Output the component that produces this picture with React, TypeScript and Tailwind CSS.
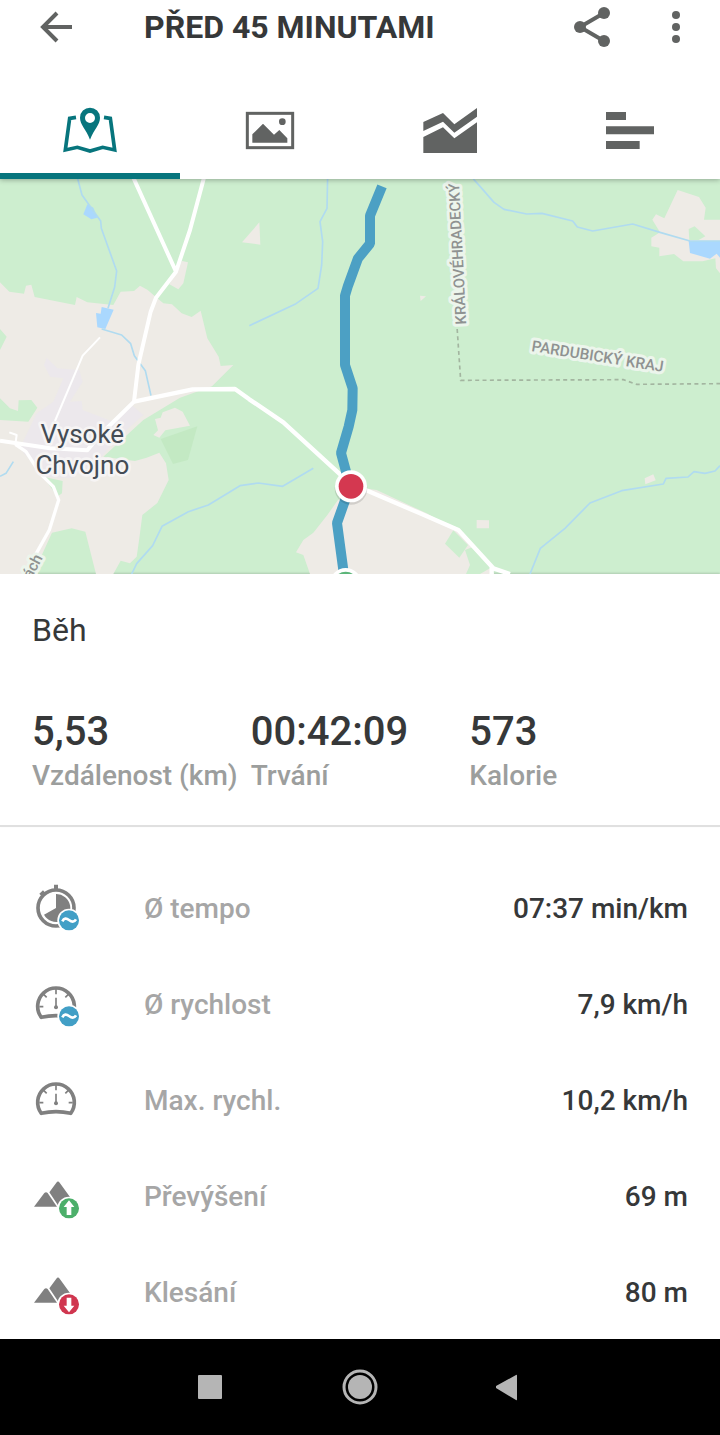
import type { ReactNode } from "react";

const ROUTE =
  "M1146 34L1110 122L1110 206L1074 250L1044 332L1035 362L1035 570L1058 640L1057 705L1046 755L1023 834L1050 934L1011 1044L1032 1200";

const MapTabIcon: React.FC = () => (
  <svg viewBox="186 318 168 144" className="h-12 w-14" fill="currentColor" aria-hidden="true">
    <path fillRule="evenodd" d="M270 323a30 30 0 0 0-30 30c0 21 18 34 30 66c12-32 30-45 30-66a30 30 0 0 0-30-30zm0 16a15 15 0 1 1 0 30a15 15 0 0 1 0-30z" />
    <path d="M228 352L209 355L196 450L232 442L270 453L308 442L344 450L331 355L312 352" fill="none" stroke="currentColor" strokeWidth="11" />
  </svg>
);

const PhotoTabIcon: React.FC = () => (
  <svg viewBox="726 318 168 144" className="h-12 w-14" fill="currentColor" aria-hidden="true">
    <rect x="742" y="340" width="136" height="103" fill="none" stroke="currentColor" strokeWidth="9" />
    <path d="M757 428V403L789 371L822 404L838 390L862 415V428Z" />
    <circle cx="847" cy="365" r="10" />
  </svg>
);

const ChartTabIcon: React.FC = () => (
  <svg viewBox="186 318 168 144" className="h-12 w-14" fill="currentColor" aria-hidden="true">
    <path d="M190 366L249 339L283 373L351 324V350L283 398L249 365L190 393Z" />
    <path d="M190 411L249 382L283 415L351 367V459H190Z" />
  </svg>
);

const SplitsTabIcon: React.FC = () => (
  <svg viewBox="726 318 168 144" className="h-12 w-14" fill="currentColor" aria-hidden="true">
    <path d="M738 336h60v24h-60zM738 379h144v24h-144zM738 423h101v24h-101z" />
  </svg>
);

const Gauge: React.FC = () => (
  <g fill="none" stroke="#808080">
    <path d="M64 161A55 55 0 1 1 152 161Q108 151 64 161Z" strokeWidth="11" strokeLinejoin="round" />
    <path d="M108 76V92M58 129H70M146 129H158M71 92L80 101M145 92L136 101" strokeWidth="5" />
    <path d="M108 102V130" strokeWidth="5" />
    <circle cx="108" cy="131" r="6" fill="#808080" stroke="none" />
  </g>
);

const Stopwatch: React.FC = () => (
  <g fill="#808080">
    <circle cx="108" cy="121" r="54" fill="none" stroke="#808080" strokeWidth="11" />
    <path d="M102 51h12v14h-12zM58 78l11-10l8 9l-11 10z" />
    <path d="M108 121V79A42 42 0 1 1 72 141Z" />
  </g>
);

const Mountains: React.FC = () => (
  <g fill="#808080">
    <path d="M42 153L73 112Q78 107 83 112L111 153Z" />
    <path d="M88 110L109 81Q114 74 119 81L150 124L117 153Z" />
  </g>
);

const Badge: React.FC<{ color: string; kind: "average" | "up" | "down" }> = ({ color, kind }) => (
  <g>
    <circle cx="147" cy="158" r="35" fill="#fff" />
    <circle cx="147" cy="158" r="30" fill={color} />
    {kind === "average" && (
      <path d="M127 161C132 151 139 151 147 157S162 165 168 155" fill="none" stroke="#fff" strokeWidth="8" />
    )}
    {kind === "up" && <path d="M147 134L163 154H154V178H140V154H131Z" fill="#fff" />}
    {kind === "down" && <path d="M147 182L163 162H154V138H140V162H131Z" fill="#fff" />}
  </g>
);

const tabs = [
  { label: "Mapa", icon: <MapTabIcon />, active: true },
  { label: "Fotky", icon: <PhotoTabIcon />, active: false },
  { label: "Grafy", icon: <ChartTabIcon />, active: false },
  { label: "Úseky", icon: <SplitsTabIcon />, active: false },
];

const stats = [
  { value: "5,53", label: "Vzdálenost (km)" },
  { value: "00:42:09", label: "Trvání" },
  { value: "573", label: "Kalorie" },
];

const details: { label: string; value: string; icon: ReactNode }[] = [
  { label: "Ø tempo", value: "07:37 min/km", icon: <><Stopwatch /><Badge color="#429fc6" kind="average" /></> },
  { label: "Ø rychlost", value: "7,9 km/h", icon: <><Gauge /><Badge color="#429fc6" kind="average" /></> },
  { label: "Max. rychl.", value: "10,2 km/h", icon: <Gauge /> },
  { label: "Převýšení", value: "69 m", icon: <><Mountains /><Badge color="#4caf6a" kind="up" /></> },
  { label: "Klesání", value: "80 m", icon: <><Mountains /><Badge color="#d0364f" kind="down" /></> },
];

const RouteMap: React.FC = () => (
  <svg
    viewBox="0 12 2160 1185"
    className="block w-full bg-[#cdeecf] font-[Roboto,sans-serif]"
    role="img"
    aria-label="Mapa trasy"
  >
    {/* Open land */}
    <g fill="#eeebe6">
      <path d="M0 322L28 350L72 356L78 332L94 329L104 366L225 390L230 366L262 382L340 390L362 350L402 348L420 332L442 344L490 385L516 388L545 415L575 426L602 407L622 490L656 545L662 573L700 570L636 634L540 668L430 735L310 845L405 858L440 848L478 833L498 865L506 915L472 984L427 1020L418 1090L410 1145L390 1165L362 1157L340 1197H288L256 1070L215 1060L156 1073L130 1130L100 1197H0V735L85 740L112 698L94 675L56 676L54 708L30 700L0 670V525L20 485L0 462Z" />
      <path d="M528 290L546 258L564 262L550 325L535 343L508 328Z" />
      <path d="M465 732L482 728L488 712L525 698L548 710L570 752L496 766L478 788L460 780L474 766Z" />
      <path d="M726 202L778 142L781 209Z" />
      <path d="M1260 362L1278 364L1262 378Z" />
      <path d="M1014 975L1090 940L1130 945L1280 1015L1380 1070L1430 1130L1482 1197H930L910 1140L888 1132L910 1095L940 1073L982 1020Z" />
      <path d="M1430 1035L1467 1036V1060H1430Z" />
      <path d="M1934 910L1960 898L1967 916L1936 928Z" />
      <path d="M2033 45L2097 66L2117 98L2112 134H2160V295L2148 280L2146 250L2108 259H2050L2022 237L1978 244V218L1954 214V188L1980 172L1957 134L1968 118L1993 130Z" />
    </g>
    {/* Built-up area */}
    <path fill="#ece8ec" d="M140 548L172 580L238 585L248 620L210 680L245 678L248 705L340 740L395 690L430 720L340 800L305 845L215 910L130 905L60 820L110 715L160 680L190 610L150 605L132 570Z" />
    {/* Woods */}
    <g fill="#cdeecf">
      <path d="M130 905L188 918L186 955L172 965Z" />
      <path d="M2066 162L2084 154L2116 184L2096 195H2068Z" />
      <path d="M1360 1066L1404 1110L1378 1148L1335 1106Z" />
      <path d="M1395 1125L1420 1115L1470 1180L1440 1197H1398L1410 1170Z" />
    </g>
    <path fill="#c3e9c3" d="M482 792L592 754L564 855L519 867Z" />
    {/* Ponds */}
    <g fill="#aad8fe">
      <path d="M262 88L280 98L292 128L274 133L250 118Z" />
      <path d="M305 396L341 404L316 462L292 457L288 414L302 416Z" />
      <path d="M2066 198H2160V248L2150 236L2130 251L2070 234Z" />
    </g>
    {/* Streams */}
    <g fill="none" stroke="#b0dbf0" strokeWidth="5" strokeLinejoin="round">
      <path d="M230 0L246 60L302 138L304 160L350 288L344 336L324 400M305 462L365 480L392 506L403 542L436 587L453 662" />
      <path d="M0 904L18 895L40 860" />
      <path d="M983 0L981 100L960 140L968 200L965 270L954 340L888 386L748 452" />
      <path d="M395 1197L410 1166L458 1112L486 1054L565 1010L625 990L720 932L775 924L848 934L940 880" />
      <path d="M1420 12L1440 34L1482 82L1512 103L1580 117L1626 115L1718 138L1732 156L1778 168L1898 147L1980 172L2070 198H2160" />
      <path d="M1590 1197L1621 1120L1695 1060L1770 984L1865 947L1990 927L1998 910L2064 906L2082 890L2115 895L2145 888L2160 872" />
    </g>
    {/* Roads */}
    <g fill="none" stroke="#fff" strokeLinejoin="round">
      <path d="M400 8L528 290L468 368L452 410L415 570L402 680L300 780L262 826L150 820L0 797M612 8L570 165L528 290" strokeWidth="12" />
      <path d="M402 680L578 643L705 642L748 673L850 742L1050 925L1260 1015L1375 1065L1480 1180L1530 1197M1475 1175V1197" strokeWidth="13" />
      <path d="M46 808L78 830L120 895L160 935L176 975L148 1065L95 1160" strokeWidth="10" />
      <path d="M46 808L50 780L28 772M300 487L248 542L165 738" strokeWidth="6" />
    </g>
    <path d="M1370 440L1382 616L1870 614L1910 628L2160 626" fill="none" stroke="#a3b5a0" strokeWidth="5" strokeDasharray="12 10" />

    <g fontWeight="500" fill="#8f9291" stroke="#ecf5ec" strokeWidth="18" strokeLinejoin="round" paintOrder="stroke">
      <text transform="translate(1399 448) rotate(-93)" fontSize="45">KRÁLOVÉHRADECKÝ</text>
      <text transform="translate(1593 528) rotate(9)" fontSize="46">PARDUBICKÝ KRAJ</text>
      <text transform="translate(129 1148) rotate(-62)" fontSize="46" textAnchor="end">ách</text>
    </g>
    <g fontSize="78" fill="#444c55" stroke="#f6f4f4" strokeWidth="16" strokeLinejoin="round" paintOrder="stroke" textAnchor="middle">
      <text x="247" y="803">Vysoké</text>
      <text x="247" y="896">Chvojno</text>
    </g>

    <path d={ROUTE} fill="none" stroke="#4ca0c4" strokeWidth="30" strokeLinejoin="bevel" />
    <circle cx="1053" cy="940" r="49" fill="#000" opacity="0.12" />
    <circle cx="1053" cy="934" r="48" fill="#fff" />
    <circle cx="1053" cy="934" r="37" fill="#d43850" />
    <circle cx="1037" cy="1227" r="48" fill="#fff" />
    <circle cx="1037" cy="1227" r="37" fill="#5cb579" />
  </svg>
);

const App: React.FC = () => {
  return (
    <div className="flex min-h-screen flex-col bg-white font-[Roboto,sans-serif] text-[#363839]">
      <header className="relative z-10 bg-white text-[#616362] shadow-[0_1px_5px_rgba(0,0,0,0.3)]">
        <div className="flex h-[53px] items-center px-10">
          <button type="button" aria-label="Zpět" className="w-8">
            <svg viewBox="0 0 32 32" className="size-8" fill="none" stroke="currentColor" strokeWidth="4" aria-hidden="true">
              <path d="M32 16H3M17 2L3 16L17 30" />
            </svg>
          </button>
          <h1 className="ml-[72px] flex-1 text-[32px] leading-10 font-bold text-[#363839]">
            PŘED 45 MINUTAMI
          </h1>
          <div className="flex items-center gap-[62px]">
            <button type="button" aria-label="Sdílet">
              <svg viewBox="0 0 36 40" className="h-10 w-9" fill="currentColor" aria-hidden="true">
                <path d="M30 6L6 20L30 34" fill="none" stroke="currentColor" strokeWidth="4" />
                <circle cx="30" cy="6" r="6" />
                <circle cx="6" cy="20" r="6" />
                <circle cx="30" cy="34" r="6" />
              </svg>
            </button>
            <button type="button" aria-label="Další možnosti">
              <svg viewBox="0 0 8 32" className="h-8 w-2" fill="currentColor" aria-hidden="true">
                <circle cx="4" cy="4" r="4" />
                <circle cx="4" cy="16" r="4" />
                <circle cx="4" cy="28" r="4" />
              </svg>
            </button>
          </div>
        </div>

        <nav className="mt-7 grid grid-cols-4">
          {tabs.map((tab) => (
            <button
              key={tab.label}
              type="button"
              aria-label={tab.label}
              className={
                tab.active
                  ? "flex h-[98px] items-center justify-center border-b-6 border-[#07757d] pt-1.5 text-[#07757d]"
                  : "flex h-[98px] items-center justify-center border-b-6 border-transparent pt-1.5"
              }
            >
              {tab.icon}
            </button>
          ))}
        </nav>
      </header>

      <main className="flex-1">
        <RouteMap />

        <section className="border-b-2 border-[#e0e0e0] px-8 pt-9 pb-[29px] shadow-[0_-1px_2px_rgba(0,0,0,0.15)]">
          <h2 className="text-[32px] leading-10">Běh</h2>
          <dl className="mt-[62px] grid grid-cols-3">
            {stats.map((stat) => (
              <div key={stat.label} className="flex flex-col-reverse gap-1">
                <dt className="text-[28px] leading-10 font-medium whitespace-nowrap text-[#9c9e9d]">{stat.label}</dt>
                <dd className="text-[40px] leading-10 font-medium">{stat.value}</dd>
              </div>
            ))}
          </dl>
        </section>

        <dl className="flex flex-col gap-12 px-8 pt-[58px] pb-[22px] text-[28px] font-medium">
          {details.map((row) => (
            <div key={row.label} className="flex h-12 items-center">
              <svg viewBox="36 52 144 144" className="size-12 overflow-visible" aria-hidden="true">
                {row.icon}
              </svg>
              <dt className="ml-16 flex-1 text-[#a6a6a6]">{row.label}</dt>
              <dd>{row.value}</dd>
            </div>
          ))}
        </dl>
      </main>

      {/* System navigation */}
      <nav className="flex h-24 items-center justify-center bg-black px-[135px] text-[#b5b5b5]">
        <button type="button" aria-label="Poslední aplikace" className="flex flex-1 justify-center">
          <span className="size-6 rounded-[1px] bg-[#b5b5b5]"></span>
        </button>
        <button type="button" aria-label="Domů" className="flex flex-1 justify-center">
          <svg viewBox="0 0 36 36" className="size-9" fill="currentColor" aria-hidden="true">
            <circle cx="18" cy="18" r="16" fill="none" stroke="currentColor" strokeWidth="3" />
            <circle cx="18" cy="18" r="12" />
          </svg>
        </button>
        <button type="button" aria-label="Zpět na předchozí" className="flex flex-1 justify-center">
          <svg viewBox="2 0 28 28" className="size-7" fill="currentColor" aria-hidden="true">
            <path d="M22 2Q23 1 23 3V26Q23 28 22 27L2 15Q0 14 2 13Z" />
          </svg>
        </button>
      </nav>
    </div>
  );
};

export default App;
